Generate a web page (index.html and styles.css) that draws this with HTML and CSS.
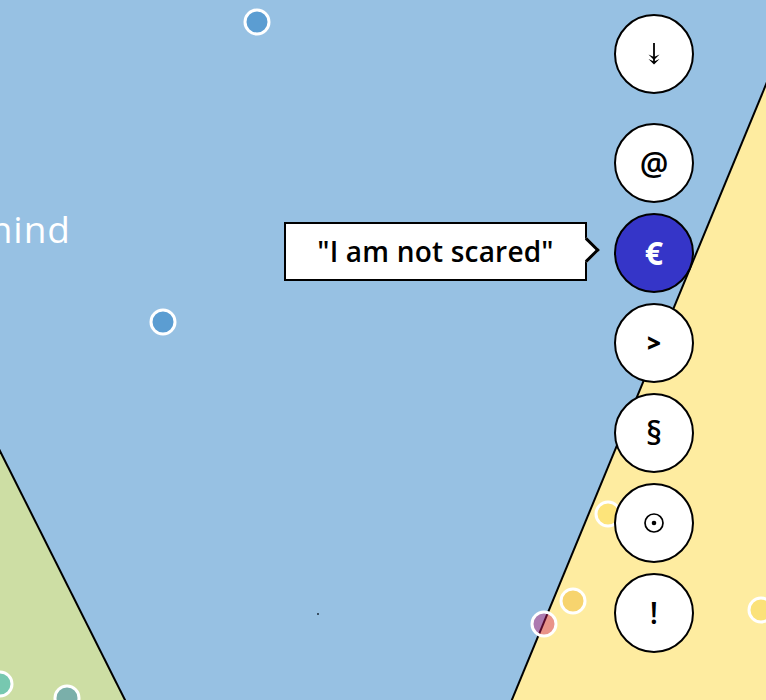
FILE: index.html
```html
<!DOCTYPE html>
<html lang="en">
<head>
<meta charset="utf-8">
<title>Chart</title>
<link rel="stylesheet" href="styles.css">
</head>
<body>
<div class="stage">
  <svg class="chart" width="766" height="700" viewBox="0 0 766 700">
    <rect x="0" y="0" width="766" height="700" fill="#97c1e3"/>
    <polygon points="0,451 125,700 0,700" fill="#cddea4"/>
    <polygon points="766,85 512,700 766,700" fill="#feeca0"/>
    <line x1="-2" y1="447" x2="126" y2="702" stroke="#000" stroke-width="2"/>
    <line x1="767" y1="82" x2="511" y2="702" stroke="#000" stroke-width="2"/>
    <circle cx="318" cy="614" r="1" fill="#1a2a3a"/>
    <g class="dots">
      <circle cx="257" cy="22" r="12" fill="#5b9dd2"/>
      <circle cx="163" cy="322" r="12" fill="#5b9dd2"/>
      <circle cx="0" cy="684" r="12" fill="#77c8b0"/>
      <circle cx="67" cy="698" r="12" fill="#7aafaa"/>
      <circle cx="608" cy="514" r="12" fill="#fde47a"/>
      <circle cx="573" cy="601" r="12" fill="#f7d46e"/>
      <circle cx="544" cy="624" r="12" fill="rgba(205,25,105,0.42)"/>
      <circle cx="761" cy="610" r="12" fill="#fbe27a"/>
    </g>
  </svg>

  <div class="label">Behind</div>

  <div class="tooltip">"I am not scared"</div>

  <nav class="menu">
    <button class="btn btn-first" aria-label="Download">
      <svg width="16" height="24" viewBox="0 0 16 24">
        <line x1="8" y1="1" x2="8" y2="20" stroke="#000" stroke-width="1.8"/>
        <path d="M2.5 12.5 L8 18 L13.5 12.5 L8 15 Z" fill="#000"/>
        <path d="M2.5 17 L8 22.5 L13.5 17 L8 19.5 Z" fill="#000"/>
      </svg>
    </button>
    <button class="btn">@</button>
    <button class="btn btn-active">€</button>
    <button class="btn btn-bold">&gt;</button>
    <button class="btn">§</button>
    <button class="btn" aria-label="Target">
      <svg width="22" height="22" viewBox="0 0 22 22">
        <circle cx="11" cy="11" r="9" fill="none" stroke="#000" stroke-width="1.7"/>
        <circle cx="11" cy="11" r="2.3" fill="#000"/>
      </svg>
    </button>
    <button class="btn btn-strong">!</button>
  </nav>
</div>
</body>
</html>
```

FILE: styles.css
```css
html, body {
  margin: 0;
  padding: 0;
}

body {
  width: 766px;
  height: 700px;
  overflow: hidden;
  font-family: "Open Sans", "DejaVu Sans", sans-serif;
}

.stage {
  position: relative;
  width: 766px;
  height: 700px;
  overflow: hidden;
  background: #97c1e3;
}

.chart {
  position: absolute;
  left: 0;
  top: 0;
  display: block;
}

.dots circle {
  stroke: #fff;
  stroke-width: 3;
}

.label {
  position: absolute;
  right: 695px;
  top: 204px;
  font-size: 37px;
  letter-spacing: 1px;
  line-height: 50px;
  color: #fff;
  white-space: nowrap;
}

.tooltip {
  position: absolute;
  left: 284px;
  top: 222px;
  width: 303px;
  height: 59px;
  box-sizing: border-box;
  border: 2px solid #000;
  background: #fff;
  display: flex;
  align-items: center;
  justify-content: center;
  padding-bottom: 2px;
  font-size: 28px;
  font-weight: 600;
  letter-spacing: 0.2px;
  color: #000;
  white-space: nowrap;
}

.tooltip::after {
  content: "";
  position: absolute;
  right: -11px;
  top: 17px;
  width: 18px;
  height: 18px;
  box-sizing: border-box;
  background: #fff;
  border-top: 3px solid #000;
  border-right: 3px solid #000;
  transform: rotate(45deg);
}

.menu {
  position: absolute;
  left: 614px;
  top: 14px;
  display: flex;
  flex-direction: column;
  gap: 10px;
}

.btn {
  width: 80px;
  height: 80px;
  box-sizing: border-box;
  border: 2px solid #000;
  border-radius: 50%;
  background: #fff;
  color: #000;
  padding: 0;
  margin: 0;
  display: flex;
  align-items: center;
  justify-content: center;
  font-family: "Open Sans", "DejaVu Sans", sans-serif;
  font-size: 32px;
  font-weight: 600;
  line-height: 1;
}

.btn-first {
  margin-bottom: 19px;
}

.btn-active {
  background: #3535c8;
  color: #fff;
  font-weight: 700;
}

.btn-bold {
  font-weight: 800;
  font-size: 24px;
}

.btn-strong {
  font-weight: 600;
  font-size: 30px;
}
```
